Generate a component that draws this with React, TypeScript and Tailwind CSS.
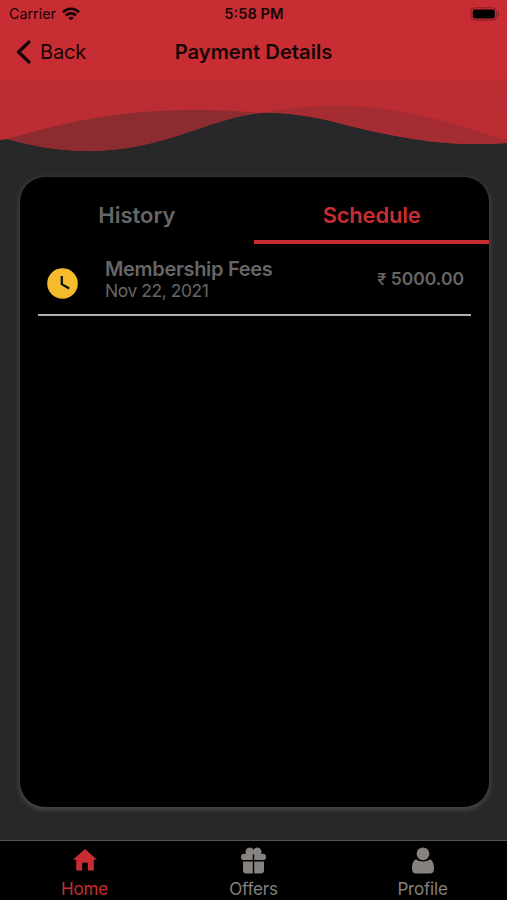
import React from 'react';

type Tab = { label: string; icon: React.ReactNode; isActive?: boolean };

const WifiIcon = () => (
  <svg className="w-[18px] h-[14px]" viewBox="0 0 18 14" fill="none" stroke="currentColor" strokeWidth="2.7">
    <path d="M1 5.2C5.4 .6 12.6 .6 17 5.2" />
    <path d="M4 8.5C6.8 5.7 11.2 5.7 14 8.5" />
    <path d="M9 13.5L6.2 10.7C7.8 9.3 10.2 9.3 11.8 10.7Z" fill="currentColor" stroke="none" />
  </svg>
);

const BatteryIcon = () => (
  <svg className="w-[30px] h-[14px]" viewBox="0 0 30 14">
    <rect x="1" y=".8" width="25.4" height="12.4" rx="3.6" fill="none" stroke="#000" strokeOpacity=".35" />
    <rect x="2.8" y="2.5" width="22" height="9" rx="2" fill="#000" />
    <path d="M28 5v4c1.6-.5 1.6-3.5 0-4Z" fill="#000" fillOpacity=".4" />
  </svg>
);

const HomeIcon = () => (
  <svg className="w-6 h-[22px]" viewBox="0 0 24 22" fill="currentColor">
    <path d="M12 0L24 10.8H20.8V21.5H14.8V13.7H9.2V21.5H3.2V10.8H0Z" />
  </svg>
);

const GiftIcon = () => (
  <svg className="w-[25px] h-[27px]" viewBox="0 0 25 27" fill="currentColor">
    <path d="M11.8 13.1H3.2A3.2 3.2 0 0 1 3.2 6.7H5A4 4 0 0 1 12.5 2.7A4 4 0 0 1 20 6.7H21.8A3.2 3.2 0 0 1 21.8 13.1H13.2V7.2H11.8Z" />
    <path d="M2 14.6H11.8V26.5H5.2A3.2 3.2 0 0 1 2 23.3ZM13.2 14.6H23V23.3A3.2 3.2 0 0 1 19.8 26.5H13.2Z" />
  </svg>
);

const ProfileIcon = () => (
  <svg className="w-[22px] h-[27px]" viewBox="0 0 22 27" fill="currentColor">
    <circle cx="11" cy="6.8" r="6.4" />
    <path d="M4.2 12.3C6.5 15.1 15.5 15.1 17.8 12.3C20.6 12.9 22 17.2 22 21.5C22 24.8 20.7 26.5 18 26.5H4C1.3 26.5 0 24.8 0 21.5C0 17.2 1.4 12.9 4.2 12.3Z" />
  </svg>
);

const tabs: Tab[] = [
  { label: 'Home', icon: <HomeIcon />, isActive: true },
  { label: 'Offers', icon: <GiftIcon /> },
  { label: 'Profile', icon: <ProfileIcon /> },
];

const Header: React.FC = () => (
  <header className="h-[79px] shrink-0 bg-[#c82d34] text-[#160506]">
    <div className="grid h-7 grid-cols-3 items-center pl-[8px] pr-[7px]">
      <div className="flex items-center gap-[6px] pl-px text-[14.3px]">
        <span>Carrier</span>
        <WifiIcon />
      </div>
      <div className="text-center text-[14.7px] font-semibold">5:58 PM</div>
      <div className="flex justify-end">
        <BatteryIcon />
      </div>
    </div>
    <div className="grid h-12 grid-cols-[1fr_auto_1fr] items-center pl-4 pr-4">
      <button className="flex items-center gap-[9px] text-[20px] tracking-[-0.2px]">
        <svg className="w-[15px] h-6" viewBox="0 0 15 24" fill="none" stroke="currentColor" strokeWidth="3.2" strokeLinecap="round" strokeLinejoin="round">
          <path d="M13 2L2.5 12L13 22" />
        </svg>
        <span>Back</span>
      </button>
      <h1 className="text-[20.2px] font-semibold">Payment Details</h1>
    </div>
  </header>
);

const Waves: React.FC = () => (
  <svg className="block h-[81px] w-full shrink-0" viewBox="0 79 507 81" preserveAspectRatio="none">
    <defs>
      <linearGradient id="waveFill" x1="0" y1="0" x2="0" y2="1">
        <stop offset="0" stopColor="#b92d33" />
        <stop offset="1" stopColor="#bd2c33" />
      </linearGradient>
    </defs>
    <path d="M0 79H507V143C455 147 407 140 350 126C316 117 288 112 262 113C211 117 163 151 90 151C53 151 27 144 7 139L0 140Z" fill="url(#waveFill)" />
    <path d="M7 139C58 124 116 110 190 110C218 110 240 111 262 113C211 117 163 151 90 151C53 151 27 144 7 139Z" fill="#8d2c30" />
    <path d="M262 113C306 104 358 103 408 113C450 121 480 132 507 141V143C455 147 407 140 350 126C316 117 288 112 262 113Z" fill="#a42c32" />
  </svg>
);

const PaymentCard: React.FC = () => (
  <main className="ml-[19.5px] mr-[18px] mt-[17px] h-[630px] shrink-0 overflow-hidden rounded-[25px] bg-black text-[#666] shadow-[0_2px_5px_1px_#48484a]">
    <div className="grid h-[67px] grid-cols-2 text-[22px] font-semibold">
      <button className="pt-[10px]">History</button>
      <button className="border-b-4 border-[#c82d34] pt-[13px] tracking-[-0.2px] text-[#c82d34]">Schedule</button>
    </div>
    <div className="mx-[18px] flex h-[72px] items-center border-b-2 border-[#b0b0b0] pr-[7px]">
      <svg className="ml-[9px] mt-[8px] h-[31px] w-[31px]" viewBox="0 0 31 31">
        <circle cx="15.5" cy="15.5" r="15.3" fill="#f6bb2d" />
        <path d="M14.8 8V16.2L22.2 20.6" fill="none" stroke="#111" strokeWidth="2.3" />
      </svg>
      <div className="ml-[27.5px] flex-1">
        <h2 className="text-[20px] font-semibold leading-6 tracking-[-0.33px]">Membership Fees</h2>
        <p className="text-[17.5px] leading-5 tracking-[-0.45px]">Nov 22, 2021</p>
      </div>
      <span className="text-[17.5px] font-semibold">
        <span className="text-[16.5px] font-medium">₹</span> 5000.00
      </span>
    </div>
  </main>
);

const TabBar: React.FC = () => (
  <nav className="mt-auto grid h-[60px] shrink-0 grid-cols-3 border-t border-[#555] bg-black">
    {tabs.map((tab) => (
      <button key={tab.label} className={`flex flex-col items-center ${tab.isActive ? 'text-[#c82d34]' : 'text-[#85827f]'}`}>
        <span className="mt-[5px] flex h-[28px] items-center">{tab.icon}</span>
        <span className="mt-[4px] text-[17px] leading-[22px] tracking-[-0.2px]">{tab.label}</span>
      </button>
    ))}
  </nav>
);

export default function App() {
  return (
    <div className="flex h-screen w-full flex-col overflow-hidden bg-[#28282a] font-['Inter',sans-serif]">
      <Header />
      <Waves />
      <PaymentCard />
      <TabBar />
    </div>
  );
}
